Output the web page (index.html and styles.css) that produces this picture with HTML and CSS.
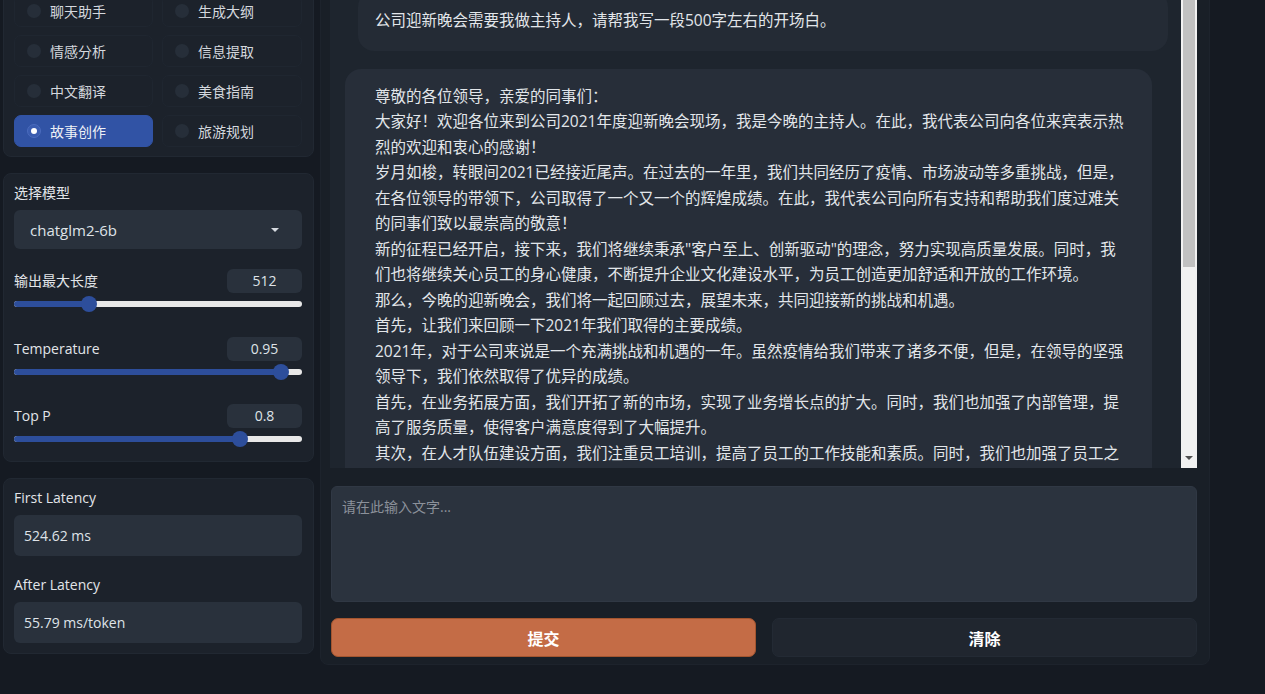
FILE: index.html
```html
<!DOCTYPE html>
<html lang="zh-CN">
<head>
    <meta charset="UTF-8">
    <meta name="viewport" content="width=device-width, initial-scale=1.0">
    <title>ChatGLM2 Demo</title>
    <link rel="stylesheet" href="styles.css">
</head>
<body>
    <div class="app">
        <!-- Columna izquierda: ajustes -->
        <div class="sidebar">
            <div class="panel tasks">
                <label class="task"><span class="dot"></span>聊天助手</label>
                <label class="task"><span class="dot"></span>生成大纲</label>
                <label class="task"><span class="dot"></span>情感分析</label>
                <label class="task"><span class="dot"></span>信息提取</label>
                <label class="task"><span class="dot"></span>中文翻译</label>
                <label class="task"><span class="dot"></span>美食指南</label>
                <label class="task selected"><span class="dot"></span>故事创作</label>
                <label class="task"><span class="dot"></span>旅游规划</label>
            </div>

            <div class="panel settings">
                <div class="label">选择模型</div>
                <div class="dropdown">
                    <span>chatglm2-6b</span>
                    <span class="caret"></span>
                </div>

                <div class="param">
                    <div class="param-head">
                        <span class="label">输出最大长度</span>
                        <span class="num">512</span>
                    </div>
                    <div class="slider">
                        <div class="track">
                            <div class="fill" style="width: 26.1%"></div>
                            <span class="thumb" style="left: 26.1%"></span>
                        </div>
                    </div>
                </div>

                <div class="param">
                    <div class="param-head">
                        <span class="label">Temperature</span>
                        <span class="num">0.95</span>
                    </div>
                    <div class="slider">
                        <div class="track">
                            <div class="fill" style="width: 92.7%"></div>
                            <span class="thumb" style="left: 92.7%"></span>
                        </div>
                    </div>
                </div>

                <div class="param">
                    <div class="param-head">
                        <span class="label">Top P</span>
                        <span class="num">0.8</span>
                    </div>
                    <div class="slider">
                        <div class="track">
                            <div class="fill" style="width: 78.4%"></div>
                            <span class="thumb" style="left: 78.4%"></span>
                        </div>
                    </div>
                </div>
            </div>

            <div class="panel latency">
                <div class="label">First Latency</div>
                <div class="value">524.62 ms</div>
                <div class="label second">After Latency</div>
                <div class="value">55.79 ms/token</div>
            </div>
        </div>

        <!-- Columna derecha: chat -->
        <div class="main">
            <div class="chatbot">
                <div class="messages">
                    <div class="msg user">公司迎新晚会需要我做主持人，请帮我写一段500字左右的开场白。</div>
                    <div class="msg bot">
                        <p>尊敬的各位领导，亲爱的同事们：</p>
                        <p>大家好！欢迎各位来到公司2021年度迎新晚会现场，我是今晚的主持人。在此，我代表公司向各位来宾表示热烈的欢迎和衷心的感谢！</p>
                        <p>岁月如梭，转眼间2021已经接近尾声。在过去的一年里，我们共同经历了疫情、市场波动等多重挑战，但是，在各位领导的带领下，公司取得了一个又一个的辉煌成绩。在此，我代表公司向所有支持和帮助我们度过难关的同事们致以最崇高的敬意！</p>
                        <p>新的征程已经开启，接下来，我们将继续秉承"客户至上、创新驱动"的理念，努力实现高质量发展。同时，我们也将继续关心员工的身心健康，不断提升企业文化建设水平，为员工创造更加舒适和开放的工作环境。</p>
                        <p>那么，今晚的迎新晚会，我们将一起回顾过去，展望未来，共同迎接新的挑战和机遇。</p>
                        <p>首先，让我们来回顾一下2021年我们取得的主要成绩。</p>
                        <p>2021年，对于公司来说是一个充满挑战和机遇的一年。虽然疫情给我们带来了诸多不便，但是，在领导的坚强领导下，我们依然取得了优异的成绩。</p>
                        <p>首先，在业务拓展方面，我们开拓了新的市场，实现了业务增长点的扩大。同时，我们也加强了内部管理，提高了服务质量，使得客户满意度得到了大幅提升。</p>
                        <p>其次，在人才队伍建设方面，我们注重员工培训，提高了员工的工作技能和素质。同时，我们也加强了员工之间的沟通与协作，打造了一支团结奋进的队伍。</p>
                    </div>
                </div>
                <!-- Barra de desplazamiento -->
                <div class="scrollbar">
                    <div class="scroll-thumb"></div>
                    <div class="scroll-down"></div>
                </div>
            </div>

            <textarea class="input" placeholder="请在此输入文字..."></textarea>

            <div class="buttons">
                <button class="btn submit">提交</button>
                <button class="btn clear">清除</button>
            </div>
        </div>
    </div>
</body>
</html>
```

FILE: styles.css
```css
body {
    margin: 0;
    background-color: #151a22;
    font-family: "Open Sans", "Noto Sans CJK SC", sans-serif;
    color: #dfe3e8;
    overflow: hidden;
    height: 694px;
}

.app {
    display: flex;
    gap: 6px;
    padding-left: 3px;
    margin-top: -20px;
}

/* Columna izquierda */
.sidebar {
    width: 311px;
    display: flex;
    flex-direction: column;
    gap: 16px;
}

.panel {
    background-color: #1c222b;
    border: 1px solid #212832;
    border-radius: 8px;
    box-sizing: border-box;
}

.label {
    font-size: 14px;
    line-height: 20px;
    color: #e2e5e9;
}

/* Tareas */
.tasks {
    display: grid;
    grid-template-columns: 139px 140px;
    column-gap: 9px;
    row-gap: 8px;
    padding: 14px 11px 9px 10px;
}

.task {
    height: 32px;
    display: flex;
    align-items: center;
    gap: 9px;
    padding-left: 12px;
    border-radius: 7px;
    border: 1px solid #1f2630;
    box-sizing: border-box;
    font-size: 14px;
    color: #d4d8de;
}

.dot {
    width: 14px;
    height: 14px;
    border-radius: 50%;
    background-color: #262e39;
    box-sizing: border-box;
    display: flex;
    align-items: center;
    justify-content: center;
}

.task.selected {
    background-color: #3153a5;
    border-color: #3153a5;
    color: #eef1f6;
}

.task.selected .dot {
    background-color: #3a5cb0;
    border: 1px solid #4b6bbd;
}

.task.selected .dot::after {
    content: "";
    width: 6px;
    height: 6px;
    border-radius: 50%;
    background-color: #ffffff;
}

/* Ajustes */
.settings {
    padding: 9px 11px 14px 10px;
}

.dropdown {
    margin-top: 7px;
    height: 39px;
    background-color: #29313c;
    border-radius: 6px;
    display: flex;
    align-items: center;
    justify-content: space-between;
    padding: 0 23px 0 16px;
    font-size: 15px;
    color: #dfe3e8;
}

.caret {
    width: 0;
    height: 0;
    border-left: 4px solid transparent;
    border-right: 4px solid transparent;
    border-top: 4px solid #d6dae0;
}

.param {
    margin-top: 20px;
}

.param + .param {
    margin-top: 24.5px;
}

.param-head {
    display: flex;
    justify-content: space-between;
    align-items: center;
    height: 24px;
}

.num {
    width: 75px;
    height: 24px;
    line-height: 24px;
    text-align: center;
    background-color: #29313c;
    border-radius: 6px;
    font-size: 14px;
    color: #dfe3e8;
}

.slider {
    margin-top: 3px;
    height: 16px;
    display: flex;
    align-items: center;
}

.track {
    position: relative;
    width: 100%;
    height: 6px;
    border-radius: 3px;
    background-color: #e8e8e8;
}

.fill {
    height: 100%;
    border-radius: 3px;
    background-color: #2d4e9b;
}

.thumb {
    position: absolute;
    top: 50%;
    width: 16px;
    height: 16px;
    border-radius: 50%;
    background-color: #2d4e9b;
    transform: translate(-50%, -50%);
}

/* Latencia */
.latency {
    padding: 9px 11px 10px 10px;
}

.value {
    margin-top: 7px;
    height: 41px;
    background-color: #29313c;
    border-radius: 6px;
    display: flex;
    align-items: center;
    padding-left: 10px;
    font-size: 14px;
    color: #dfe3e8;
}

.label.second {
    margin-top: 19px;
}

/* Columna derecha */
.main {
    width: 890px;
    background-color: #191f27;
    border: 1px solid #1d232c;
    border-radius: 8px;
    box-sizing: border-box;
    padding: 10px 12px 7px 9px;
    display: flex;
    flex-direction: column;
}

.chatbot {
    height: 477px;
    display: flex;
    overflow: hidden;
    background-color: #1e252e;
}

.messages {
    flex: 1;
    overflow: hidden;
}

.msg {
    border-radius: 16px;
    font-size: 15.5px;
    line-height: 25.5px;
    color: #e2e6ea;
}

.msg p {
    margin: 0;
}

.user {
    margin: 0 13px 0 28px;
    padding: 17px 17px;
    background-color: #242b35;
}

.bot {
    margin: 18px 29px 0 15px;
    padding: 15px 0 15px 30px;
    background-color: #272e39;
}

.bot p {
    width: 754px;
}

.scrollbar {
    width: 16px;
    background-color: #f1f1f1;
    display: flex;
    flex-direction: column;
    justify-content: space-between;
    align-items: center;
}

.scroll-thumb {
    width: 12px;
    height: 276px;
    background-color: #c1c1c1;
}

.scroll-down {
    width: 0;
    height: 0;
    margin-bottom: 8px;
    border-left: 4px solid transparent;
    border-right: 4px solid transparent;
    border-top: 4px solid #505050;
}

.input {
    margin: 18px 0 0 1px;
    height: 116px;
    box-sizing: border-box;
    resize: none;
    background-color: #2b333e;
    border: 1px solid #303844;
    border-radius: 6px;
    padding: 9px 10px;
    font-family: inherit;
    font-size: 14px;
    color: #dfe3e8;
    outline: none;
}

.input::placeholder {
    color: #8b919a;
}

.buttons {
    margin: 16px 0 0 1px;
    display: flex;
    gap: 16px;
}

.btn {
    flex: 1;
    height: 39px;
    border-radius: 7px;
    font-family: inherit;
    font-size: 16px;
    font-weight: bold;
    color: #ffffff;
    cursor: pointer;
}

.submit {
    background-color: #c46c46;
    border: 1px solid #a3552f;
}

.clear {
    background-color: #20262f;
    border: 1px solid #232a34;
}
```
